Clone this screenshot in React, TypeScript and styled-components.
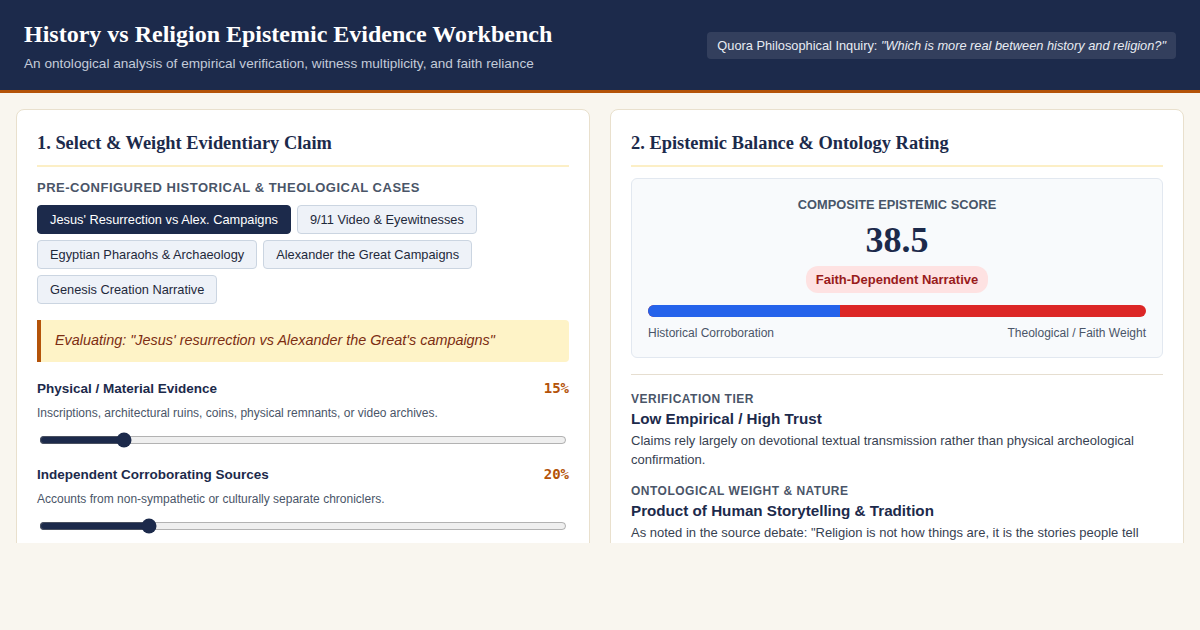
import React, { useState } from "react";
import styled, { createGlobalStyle } from "styled-components";

const Global = createGlobalStyle`
  html, body { margin: 0; padding: 0; background: #f9f6ef; }
  body { font-family: "Liberation Sans", Arial, sans-serif; color: #1e293b; }
  * { box-sizing: border-box; }
`;

const Header = styled.header`
  background: #1c2a4b;
  border-bottom: 3px solid #b45309;
  height: 93px;
  padding: 0 24px;
  display: flex;
  align-items: center;
  justify-content: space-between;
`;

const TitleBlock = styled.div`
  display: flex;
  flex-direction: column;
  gap: 8px;
  padding-top: 2px;
`;

const Title = styled.h1`
  margin: 0;
  font-family: "Liberation Serif", "Times New Roman", serif;
  font-size: 24px;
  font-weight: 700;
  color: #ffffff;
  line-height: 1.1;
`;

const Subtitle = styled.p`
  margin: 0;
  font-size: 13.6px;
  color: #c3cbd9;
`;

const Badge = styled.div`
  background: rgba(255, 255, 255, 0.1);
  color: #e8ecf3;
  font-size: 12.8px;
  padding: 6px 10px;
  border-radius: 4px;
  em { font-style: italic; }
`;

const Main = styled.main`
  height: 450px;
  overflow: hidden;
  padding: 16px 16px 0;
  display: grid;
  grid-template-columns: 1fr 1fr;
  gap: 20px;
  align-items: start;
`;

const Card = styled.section`
  background: #ffffff;
  border: 1px solid #e9e0cd;
  border-radius: 8px;
  padding: 21px 20px 24px;
  min-height: 600px;
`;

const CardTitle = styled.h2`
  margin: 0 0 11px;
  padding: 2px 0 11px;
  font-family: "Liberation Serif", "Times New Roman", serif;
  font-size: 18.4px;
  font-weight: 700;
  color: #1c2a4b;
  border-bottom: 2px solid #fcefc6;
`;

const SectionLabel = styled.div`
  font-size: 13px;
  font-weight: 700;
  letter-spacing: 0.5px;
  text-transform: uppercase;
  color: #4a5568;
  margin: 13px 0 10px;
`;

const Tags = styled.div`
  display: flex;
  flex-wrap: wrap;
  gap: 6px;
  margin-bottom: 16px;
`;

const Tag = styled.button<{ $active?: boolean }>`
  font-family: "Liberation Sans", Arial, sans-serif;
  font-size: 12.8px;
  height: 29px;
  padding: 0 12px;
  border-radius: 4px;
  border: 1px solid ${(p) => (p.$active ? "#1c2a4b" : "#cbd5e1")};
  background: ${(p) => (p.$active ? "#1c2a4b" : "#eef2f8")};
  color: ${(p) => (p.$active ? "#ffffff" : "#1e293b")};
  cursor: pointer;
`;

const Evaluating = styled.div`
  background: #fef3c7;
  border-left: 4px solid #b45309;
  border-radius: 0 4px 4px 0;
  padding: 12px 14px 14px;
  font-size: 14.4px;
  font-style: italic;
  color: #7c2d12;
  margin-bottom: 15px;
`;

const Factor = styled.div`
  margin-bottom: 14px;
`;

const FactorHead = styled.div`
  display: flex;
  justify-content: space-between;
  align-items: baseline;
`;

const FactorName = styled.div`
  font-size: 13.5px;
  font-weight: 700;
  color: #1c2a4b;
`;

const FactorValue = styled.div`
  font-family: "DejaVu Sans Mono", "Liberation Mono", monospace;
  font-size: 14px;
  font-weight: 700;
  color: #b45309;
  margin-top: 3px;
`;

const FactorDesc = styled.div`
  font-size: 12px;
  color: #4a5568;
  margin-top: 10px;
`;

const Range = styled.input`
  width: calc(100% - 4px);
  height: 18px;
  margin: 11px 2px 0;
  accent-color: #1c2a4b;
  display: block;
`;

const ScoreBox = styled.div`
  background: #f8fafc;
  border: 1px solid #e2e8f0;
  border-radius: 6px;
  padding: 18px 16px 17px;
  display: flex;
  flex-direction: column;
  align-items: center;
`;

const ScoreLabel = styled.div`
  font-size: 12.8px;
  font-weight: 700;
  color: #475569;
  text-transform: uppercase;
`;

const ScoreValue = styled.div`
  font-family: "Liberation Serif", "Times New Roman", serif;
  font-size: 36px;
  font-weight: 700;
  color: #1c2a4b;
  line-height: 1;
  margin-top: 10px;
`;

const Pill = styled.div`
  margin-top: 8px;
  background: #fee2e2;
  color: #991b1b;
  font-size: 13px;
  font-weight: 700;
  padding: 6px 10px;
  border-radius: 12px;
`;

const Bar = styled.div`
  width: 100%;
  height: 12px;
  border-radius: 6px;
  overflow: hidden;
  display: flex;
  margin-top: 12px;
  background: #dc2626;
`;

const BarFill = styled.div`
  height: 100%;
  background: #2563eb;
`;

const BarLabels = styled.div`
  width: 100%;
  display: flex;
  justify-content: space-between;
  font-size: 12px;
  color: #4a5568;
  margin-top: 9px;
`;

const Divider = styled.hr`
  border: none;
  border-top: 1px solid #e6ded0;
  margin: 16px 0 17px;
`;

const InfoBlock = styled.div`
  margin-bottom: 15px;
`;

const InfoLabel = styled.div`
  font-size: 12px;
  font-weight: 700;
  text-transform: uppercase;
  color: #4a5568;
  letter-spacing: 0.5px;
`;

const InfoTitle = styled.div`
  font-size: 15.2px;
  font-weight: 700;
  color: #1c2a4b;
  margin-top: 4px;
`;

const InfoText = styled.p`
  font-size: 13px;
  line-height: 19px;
  color: #374151;
  margin: 4px 0 0;
`;

const cases = [
  "Jesus' Resurrection vs Alex. Campaigns",
  "9/11 Video & Eyewitnesses",
  "Egyptian Pharaohs & Archaeology",
  "Alexander the Great Campaigns",
  "Genesis Creation Narrative",
];

export default function App() {
  const [active, setActive] = useState(0);
  const [physical, setPhysical] = useState(15);
  const [sources, setSources] = useState(20);
  const score = 38.5;

  return (
    <>
      <Global />
      <Header>
        <TitleBlock>
          <Title>History vs Religion Epistemic Evidence Workbench</Title>
          <Subtitle>
            An ontological analysis of empirical verification, witness multiplicity, and faith reliance
          </Subtitle>
        </TitleBlock>
        <Badge>
          Quora Philosophical Inquiry: <em>"Which is more real between history and religion?"</em>
        </Badge>
      </Header>
      <Main>
        <Card>
          <CardTitle>1. Select &amp; Weight Evidentiary Claim</CardTitle>
          <SectionLabel>Pre-Configured Historical &amp; Theological Cases</SectionLabel>
          <Tags>
            {cases.map((c, i) => (
              <Tag key={c} $active={i === active} onClick={() => setActive(i)}>
                {c}
              </Tag>
            ))}
          </Tags>
          <Evaluating>Evaluating: "Jesus' resurrection vs Alexander the Great's campaigns"</Evaluating>
          <Factor>
            <FactorHead>
              <FactorName>Physical / Material Evidence</FactorName>
              <FactorValue>{physical}%</FactorValue>
            </FactorHead>
            <FactorDesc>Inscriptions, architectural ruins, coins, physical remnants, or video archives.</FactorDesc>
            <Range
              type="range"
              min={0}
              max={100}
              value={physical}
              onChange={(e) => setPhysical(Number(e.target.value))}
            />
          </Factor>
          <Factor>
            <FactorHead>
              <FactorName>Independent Corroborating Sources</FactorName>
              <FactorValue>{sources}%</FactorValue>
            </FactorHead>
            <FactorDesc>Accounts from non-sympathetic or culturally separate chroniclers.</FactorDesc>
            <Range
              type="range"
              min={0}
              max={100}
              value={sources}
              onChange={(e) => setSources(Number(e.target.value))}
            />
          </Factor>
        </Card>
        <Card>
          <CardTitle>2. Epistemic Balance &amp; Ontology Rating</CardTitle>
          <ScoreBox>
            <ScoreLabel>Composite Epistemic Score</ScoreLabel>
            <ScoreValue>{score}</ScoreValue>
            <Pill>Faith-Dependent Narrative</Pill>
            <Bar>
              <BarFill style={{ width: `${score}%` }} />
            </Bar>
            <BarLabels>
              <span>Historical Corroboration</span>
              <span>Theological / Faith Weight</span>
            </BarLabels>
          </ScoreBox>
          <Divider />
          <InfoBlock>
            <InfoLabel>Verification Tier</InfoLabel>
            <InfoTitle>Low Empirical / High Trust</InfoTitle>
            <InfoText>
              Claims rely largely on devotional textual transmission rather than physical archeological confirmation.
            </InfoText>
          </InfoBlock>
          <InfoBlock>
            <InfoLabel>Ontological Weight &amp; Nature</InfoLabel>
            <InfoTitle>Product of Human Storytelling &amp; Tradition</InfoTitle>
            <InfoText>
              As noted in the source debate: "Religion is not how things are, it is the stories people tell
              about how things are."
            </InfoText>
          </InfoBlock>
        </Card>
      </Main>
    </>
  );
}
